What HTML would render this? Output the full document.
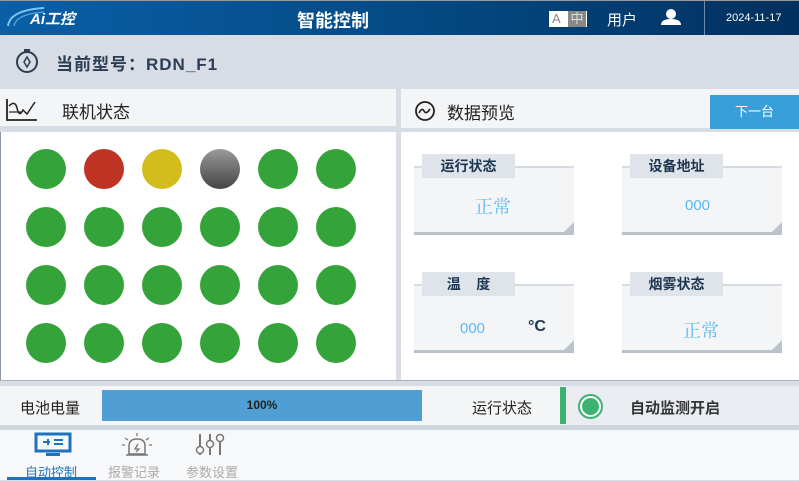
<!DOCTYPE html>
<html><head><meta charset="utf-8"><style>
*{margin:0;padding:0;box-sizing:border-box}
body{width:799px;height:480px;overflow:hidden;background:#d8dce4;font-family:"Liberation Sans","Noto Sans CJK SC",sans-serif;position:relative}
.a{position:absolute}
.hdr{left:0;top:0;width:799px;height:35px;background:linear-gradient(90deg,#0a5fa6,#03467f 60%,#01305e);border-top:1px solid #999}
.dot{position:absolute;width:40px;height:40px;border-radius:50%;background:#34a33a}
.card{position:absolute;width:160px;height:69px;background:#f4f5f7;border-top:2px solid #d6dae1;border-bottom:3px solid #b9c2cd}
.card .tab{position:absolute;left:8px;top:-14px;width:93px;height:24px;background:#dfe3ea;color:#1c3550;font-weight:bold;font-size:14px;text-align:center;line-height:24px}
.card .tri{position:absolute;right:0;bottom:0;width:0;height:0;border-left:10px solid transparent;border-bottom:10px solid #b9c2cd}
.card .v{position:absolute;color:#5ab8f2;font-family:"Liberation Serif","Noto Serif CJK SC",serif}
.card .n{position:absolute;color:#5ab8f2;font-family:"Liberation Sans",sans-serif}
</style></head><body>
<div class="a hdr"></div>
<svg class="a" style="left:4px;top:4px" width="90" height="26"><path d="M4 22 Q6 6 40 4" stroke="#7fc4f0" stroke-width="2" fill="none"/><path d="M10 22 Q12 10 40 8" stroke="#4aa0e0" stroke-width="1.5" fill="none"/></svg>
<div class="a" style="left:30px;top:8px;color:#fff;font-style:italic;font-weight:bold;font-size:15px">Ai工控</div>
<div class="a" style="left:297px;top:7px;color:#fff;font-weight:bold;font-size:18px">智能控制</div>
<div class="a" style="left:549px;top:11px;width:38px;height:16px;background:#fff"></div>
<div class="a" style="left:552px;top:11px;color:#888;font-size:13px;line-height:16px">A</div>
<div class="a" style="left:568px;top:11px;width:18px;height:16px;background:#888;color:#ddd;font-size:13px;text-align:center;line-height:16px">中</div>
<div class="a" style="left:607px;top:9px;color:#fff;font-size:15px">用户</div>
<svg class="a" style="left:659px;top:8px" width="24" height="18"><circle cx="12" cy="6" r="5" fill="#fff"/><path d="M2 17 Q2 11 12 11 Q22 11 22 17Z" fill="#fff"/></svg>
<div class="a" style="left:704px;top:1px;width:1px;height:34px;background:#6f8bab"></div>
<div class="a" style="left:726px;top:12px;color:#fff;font-size:11px">2024-11-17</div>
<svg class="a" style="left:14px;top:48px" width="26" height="26"><circle cx="13" cy="14" r="10" fill="none" stroke="#2e3e52" stroke-width="2"/><rect x="10" y="1" width="6" height="3" fill="#2e3e52"/><path d="M13 9 L16 14 L13 19 L10 14Z" fill="none" stroke="#2e3e52" stroke-width="1.5"/></svg>
<div class="a" style="left:56px;top:50px;color:#2c3e55;font-weight:bold;font-size:17px;letter-spacing:1px">当前型号：RDN_F1</div>
<div class="a" style="left:0;top:89px;width:396px;height:37px;background:#f4f5f7"></div>
<div class="a" style="left:0;top:132px;width:396px;height:248px;background:#fff;border-left:1px solid #8a96a5"></div>
<svg class="a" style="left:5px;top:98px" width="34" height="24"><path d="M2 1 V22 H32" stroke="#222" stroke-width="1.8" fill="none"/><path d="M4 8 Q10 2 12 10 Q14 20 18 12 L22 16 L30 4" stroke="#222" stroke-width="1.5" fill="none"/><path d="M4 14 H16" stroke="#222" stroke-width="1.2"/></svg>
<div class="a" style="left:62px;top:98px;color:#222;font-size:17px">联机状态</div>
<div class="dot" style="left:26px;top:149px"></div>
<div class="dot" style="left:84px;top:149px;background:#be3323"></div>
<div class="dot" style="left:142px;top:149px;background:#d3bd1d"></div>
<div class="dot" style="left:200px;top:149px;background:linear-gradient(#999,#444)"></div>
<div class="dot" style="left:258px;top:149px"></div>
<div class="dot" style="left:316px;top:149px"></div>
<div class="dot" style="left:26px;top:207px"></div><div class="dot" style="left:84px;top:207px"></div><div class="dot" style="left:142px;top:207px"></div><div class="dot" style="left:200px;top:207px"></div><div class="dot" style="left:258px;top:207px"></div><div class="dot" style="left:316px;top:207px"></div>
<div class="dot" style="left:26px;top:265px"></div><div class="dot" style="left:84px;top:265px"></div><div class="dot" style="left:142px;top:265px"></div><div class="dot" style="left:200px;top:265px"></div><div class="dot" style="left:258px;top:265px"></div><div class="dot" style="left:316px;top:265px"></div>
<div class="dot" style="left:26px;top:323px"></div><div class="dot" style="left:84px;top:323px"></div><div class="dot" style="left:142px;top:323px"></div><div class="dot" style="left:200px;top:323px"></div><div class="dot" style="left:258px;top:323px"></div><div class="dot" style="left:316px;top:323px"></div>
<div class="a" style="left:401px;top:89px;width:398px;height:39px;background:#f4f5f7"></div>
<div class="a" style="left:401px;top:132px;width:398px;height:248px;background:#fff"></div>
<svg class="a" style="left:414px;top:101px" width="22" height="20"><circle cx="11" cy="10" r="9" fill="none" stroke="#222" stroke-width="1.8"/><path d="M5 12 Q8 6 10 10 Q12 14 16 8" stroke="#222" stroke-width="1.6" fill="none"/></svg>
<div class="a" style="left:447px;top:99px;color:#222;font-size:17px">数据预览</div>
<div class="a" style="left:710px;top:95px;width:89px;height:34px;background:#38a0d9;color:#fff;font-size:13px;text-align:center;line-height:34px">下一台</div>
<div class="card" style="left:414px;top:166px"><div class="tab">运行状态</div><div class="v" style="left:61px;top:25px;font-size:18px">正常</div><div class="tri"></div></div>
<div class="card" style="left:622px;top:166px"><div class="tab">设备地址</div><div class="n" style="left:63px;top:29px;font-size:15px">000</div><div class="tri"></div></div>
<div class="card" style="left:414px;top:284px"><div class="tab">温&nbsp;&nbsp;&nbsp;&nbsp;度</div><div class="n" style="left:46px;top:34px;font-size:15px">000</div><div class="a" style="left:114px;top:32px;color:#1c3550;font-size:16px;font-weight:bold">°C</div><div class="tri"></div></div>
<div class="card" style="left:622px;top:284px"><div class="tab">烟雾状态</div><div class="v" style="left:61px;top:31px;font-size:18px">正常</div><div class="tri"></div></div>
<div class="a" style="left:0;top:380px;width:799px;height:6px;background:#d8dce4;border-top:1px solid #aab4c0"></div>
<div class="a" style="left:0;top:386px;width:799px;height:39px;background:#f4f5f7"></div>
<div class="a" style="left:566px;top:386px;width:233px;height:39px;background:#e9ecf0"></div>
<div class="a" style="left:20px;top:397px;color:#222;font-size:15px">电池电量</div>
<div class="a" style="left:102px;top:390px;width:320px;height:31px;background:#4f9fd4;color:#222;font-size:12px;text-align:center;line-height:31px;font-weight:bold">100%</div>
<div class="a" style="left:472px;top:397px;color:#222;font-size:15px">运行状态</div>
<div class="a" style="left:560px;top:387px;width:6px;height:37px;background:#3cb371"></div>
<div class="a" style="left:578px;top:394px;width:25px;height:25px;border-radius:50%;border:2px solid #3cb371;background:#fff"></div>
<div class="a" style="left:582px;top:398px;width:17px;height:17px;border-radius:50%;background:#3cb371"></div>
<div class="a" style="left:630px;top:397px;color:#333;font-size:15px;font-weight:bold">自动监测开启</div>
<div class="a" style="left:0;top:425px;width:799px;height:5px;background:#cfd5dd"></div>
<div class="a" style="left:0;top:430px;width:799px;height:50px;background:#f7f8fa"></div>
<svg class="a" style="left:34px;top:432px" width="38" height="26"><rect x="2" y="2" width="34" height="17" fill="none" stroke="#1e73be" stroke-width="3"/><rect x="12" y="21" width="14" height="3" fill="#1e73be"/><path d="M9 10 H16 M14 7 V13 M20 8 H29 M20 12 H29" stroke="#1e73be" stroke-width="2"/></svg>
<div class="a" style="left:25px;top:462px;color:#1e73be;font-size:13px">自动控制</div>
<div class="a" style="left:7px;top:477px;width:89px;height:3px;background:#1e73be"></div>
<svg class="a" style="left:120px;top:432px" width="34" height="26"><path d="M9 22 V14 Q9 7 17 7 Q25 7 25 14 V22Z M6 23 H28" stroke="#777" stroke-width="1.5" fill="none"/><path d="M17 1 V4 M5 6 L8 8 M29 6 L26 8 M2 13 H5 M32 13 H29 M18 12 L15 17 H19 L16 20" stroke="#777" stroke-width="1.3" fill="none"/></svg>
<div class="a" style="left:108px;top:462px;color:#aaa;font-size:13px">报警记录</div>
<svg class="a" style="left:193px;top:432px" width="36" height="26"><path d="M7 2 V23 M17 2 V23 M27 2 V23" stroke="#777" stroke-width="2"/><circle cx="7" cy="18" r="3.5" fill="#f7f8fa" stroke="#777" stroke-width="1.5"/><circle cx="17" cy="12" r="3.5" fill="#f7f8fa" stroke="#777" stroke-width="1.5"/><circle cx="27" cy="6" r="3.5" fill="#f7f8fa" stroke="#777" stroke-width="1.5"/></svg>
<div class="a" style="left:186px;top:462px;color:#aaa;font-size:13px">参数设置</div>
</body></html>
